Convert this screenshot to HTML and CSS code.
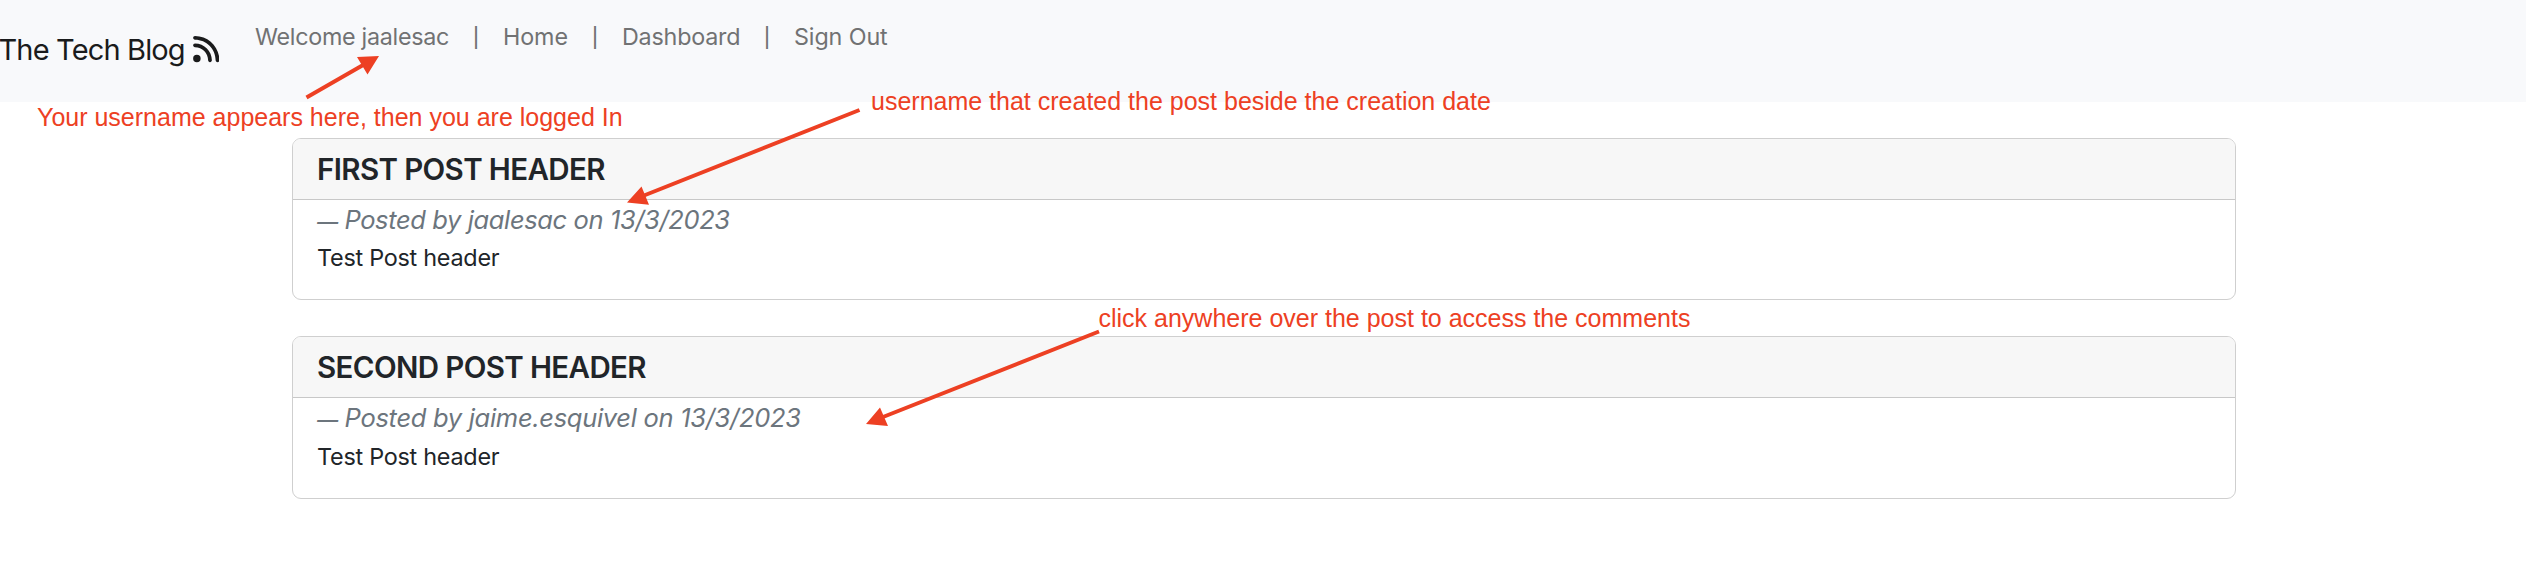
FILE: index.html
```
<!DOCTYPE html>
<html lang="en">
<head>
<meta charset="utf-8">
<title>The Tech Blog</title>
<link rel="stylesheet" href="styles.css">
</head>
<body>
<header class="navbar">
  <a class="brand"><span class="brand-name">The Tech Blog</span><svg class="brand-icon" viewBox="0 0 448 512"><path d="M0 64C0 46.3 14.3 32 32 32c229.800 0 416 186.200 416 416c0 17.700-14.300 32-32 32s-32-14.300-32-32C384 253.600 226.400 96 32 96C14.300 96 0 81.700 0 64zM0 416a64 64 0 1 1 128 0A64 64 0 1 1 0 416zM32 160c159.100 0 288 128.900 288 288c0 17.700-14.300 32-32 32s-32-14.300-32-32c0-123.700-100.300-224-224-224c-17.700 0-32-14.300-32-32s14.300-32 32-32z"/></svg></a>
  <nav class="menu">
    <span class="welcome">Welcome jaalesac</span>
    <span class="separator">|</span>
    <a class="home">Home</a>
    <span class="separator">|</span>
    <a class="dashboard">Dashboard</a>
    <span class="separator">|</span>
    <a class="sign-out">Sign Out</a>
  </nav>
</header>
<main class="posts">
  <article class="card">
    <h2 class="card-title">FIRST POST HEADER</h2>
    <div class="card-body">
      <p class="meta meta-short"><span class="dash">—</span> Posted by jaalesac on 13/3/2023</p>
      <p class="content">Test Post header</p>
    </div>
  </article>
  <article class="card">
    <h2 class="card-title">SECOND POST HEADER</h2>
    <div class="card-body">
      <p class="meta"><span class="dash">—</span> Posted by jaime.esquivel on 13/3/2023</p>
      <p class="content">Test Post header</p>
    </div>
  </article>
</main>
<svg class="arrows" viewBox="0 0 2526 576">
  <path class="shaft" d="M306.500 97.500L364 64.500M859.500 110L644 195.500M1099 331.500L883 417"/>
  <path class="head" d="M379 56L357 57L367.500 74.500ZM627 202.500L641.500 186.500L649 204.700ZM866 424L880 407.500L888 426Z"/>
</svg>
<div class="note note-login">Your username appears here, then you are logged In</div>
<div class="note note-author">username that created the post beside the creation date</div>
<div class="note note-comments">click anywhere over the post to access the comments</div>
</body>
</html>
```
FILE: styles.css
```
* { box-sizing: border-box; }
body {
  margin: 0;
  position: relative;
  height: 576px;
  overflow: hidden;
  background: #fff;
  color: #212529;
  font-family: Inter, "Liberation Sans", sans-serif;
}
.navbar {
  display: flex;
  align-items: flex-start;
  height: 102px;
  background: #f8f9fb;
}
.brand {
  display: flex;
  align-items: center;
  width: 255px;
  padding-top: 29px;
  color: #1a1b1c;
  font-size: 29px;
  line-height: 41px;
}
.brand-name {
  width: 193px;
  margin-left: -1.500px;
  letter-spacing: -.85px;
  white-space: nowrap;
}
.brand-icon {
  width: 26.500px;
  height: 30px;
  margin: -1px 0 0 1px;
  fill: currentColor;
}
.menu {
  display: flex;
  padding-top: 18px;
  color: #717273;
  font-size: 23.300px;
  line-height: 37px;
  letter-spacing: -.1px;
  white-space: nowrap;
}
.welcome { width: 194px; letter-spacing: -.28px; }
.separator {
  width: 54px;
  font-family: "Liberation Sans", sans-serif;
  text-align: center;
}
.home { width: 65px; }
.dashboard { width: 118px; letter-spacing: -.2px; }
.posts {
  display: flex;
  flex-direction: column;
  gap: 36px;
  width: 1944px;
  margin: 36px 0 0 292px;
}
.card {
  height: 162px;
  border: 1px solid #cfcfcf;
  border-radius: 9px;
  overflow: hidden;
}
.card + .card { height: 163px; }
.card-title {
  height: 61px;
  margin: 0;
  padding-left: 24px;
  background: #f7f7f7;
  border-bottom: 1px solid #c8c8c8;
  font-size: 29.500px;
  font-weight: 560;
  line-height: 61px;
  letter-spacing: -.62px;
}
.card-body { padding: 1px 24px 0; }
.meta {
  margin: 0;
  color: #6c757d;
  font-size: 25.500px;
  font-style: italic;
  line-height: 38px;
  letter-spacing: -.3px;
}
.meta-short { letter-spacing: -.38px; }
.dash {
  font-size: 21px;
  font-weight: 500;
  line-height: 1;
}
.content {
  margin: 0;
  font-size: 23.400px;
  line-height: 38px;
  letter-spacing: -.26px;
}
.card + .card .content { padding-top: 1px; }
.arrows {
  position: absolute;
  inset: 0;
  width: 2526px;
  height: 576px;
}
.shaft { fill: none; stroke: #ed4023; stroke-width: 4; }
.head { fill: #ed4023; }
.note {
  position: absolute;
  color: #ed4023;
  font-family: "Liberation Sans", sans-serif;
  font-size: 25px;
  line-height: 30px;
  white-space: nowrap;
}
.note-login { left: 37px; top: 102px; }
.note-author { left: 871px; top: 86px; }
.note-comments { left: 1098.500px; top: 303px; }
```
